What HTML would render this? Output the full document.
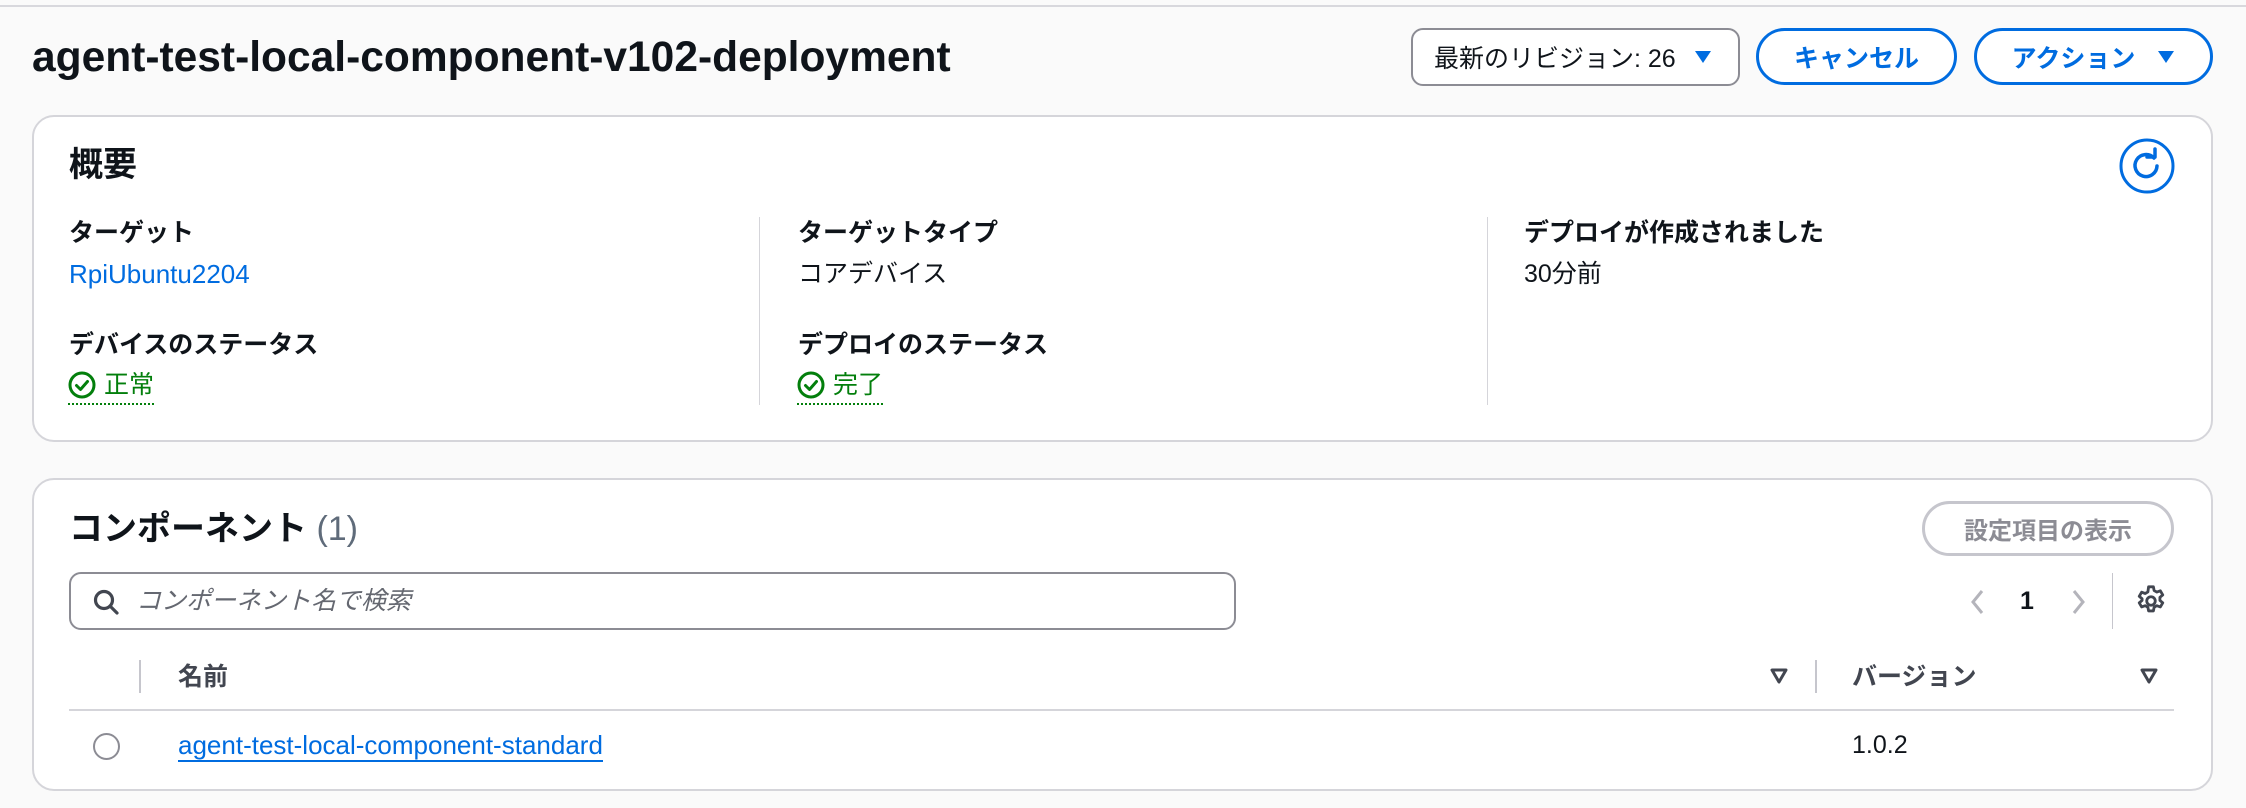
<!DOCTYPE html>
<html><head><meta charset="utf-8"><style>
*{margin:0;padding:0;box-sizing:border-box}
body{width:2246px;height:808px;background:#fafafa;font-family:"Liberation Sans","Noto Sans CJK JP",sans-serif;color:#0f141a;position:relative;overflow:hidden}
.a{position:absolute;white-space:nowrap}
.card{position:absolute;background:#fff;border:2px solid #d5d5da;border-radius:22px}
.lbl{font-size:25px;font-weight:bold;line-height:28px}
.val{font-size:25px;line-height:28px}
.blue{color:#006ce0}
.btn{position:absolute;border:3px solid #006ce0;border-radius:30px;color:#006ce0;font-weight:bold;font-size:25px;display:flex;align-items:center;justify-content:center;background:#fff}
.ok{color:#037f0c;font-size:25px;line-height:28px;border-bottom:2px dotted #037f0c;padding-bottom:4px;display:flex;align-items:center;gap:8px}
</style></head><body>
<div class="a" style="left:0;top:5px;width:2246px;height:2px;background:#d8d8dd"></div>
<div class="a" style="left:32px;top:34px;font-size:42.5px;font-weight:bold;line-height:48px">agent-test-local-component-v102-deployment</div>

<div class="a" style="left:1411px;top:28px;width:329px;height:58px;border:2px solid #8c8c94;border-radius:12px;background:#fff;font-size:25px;display:flex;align-items:center;padding-left:21px">最新のリビジョン: 26<svg style="margin-left:18px" width="18" height="14" viewBox="0 0 18 14"><path d="M1 1h16L9 13z" fill="#006ce0"/></svg></div>
<div class="btn" style="left:1756px;top:28px;width:201px;height:57px">キャンセル</div>
<div class="btn" style="left:1974px;top:28px;width:239px;height:57px">アクション<svg style="margin-left:22px" width="18" height="14" viewBox="0 0 18 14"><path d="M1 1h16L9 13z" fill="#006ce0"/></svg></div>

<div class="card" style="left:32px;top:115px;width:2181px;height:327px"></div>
<div class="a" style="left:69px;top:145px;font-size:34px;font-weight:bold;line-height:40px">概要</div>
<svg class="a" style="left:2119px;top:138px" width="56" height="56" viewBox="0 0 56 56"><circle cx="28" cy="28" r="26" fill="none" stroke="#006ce0" stroke-width="3"/><path d="M35 20a11 11 0 1 0 3 8" fill="none" stroke="#006ce0" stroke-width="3.5" stroke-linecap="round"/><path d="M28 19h8v-8" fill="none" stroke="#006ce0" stroke-width="3.5" stroke-linecap="round" stroke-linejoin="round"/></svg>

<div class="a lbl" style="left:69px;top:219px">ターゲット</div>
<div class="a val blue" style="left:69px;top:260px;font-size:26px">RpiUbuntu2204</div>
<div class="a lbl" style="left:69px;top:331px">デバイスのステータス</div>
<div class="a ok" style="left:68px;top:371px"><svg width="28" height="28" viewBox="0 0 28 28"><circle cx="14" cy="14" r="12" fill="none" stroke="#037f0c" stroke-width="3"/><path d="M8.5 14.5l4 4 7-8" fill="none" stroke="#037f0c" stroke-width="3" stroke-linecap="round" stroke-linejoin="round"/></svg>正常</div>

<div class="a" style="left:759px;top:217px;width:1px;height:188px;background:#d5d5da"></div>
<div class="a lbl" style="left:798px;top:219px">ターゲットタイプ</div>
<div class="a val" style="left:798px;top:260px">コアデバイス</div>
<div class="a lbl" style="left:798px;top:331px">デプロイのステータス</div>
<div class="a ok" style="left:797px;top:371px"><svg width="28" height="28" viewBox="0 0 28 28"><circle cx="14" cy="14" r="12" fill="none" stroke="#037f0c" stroke-width="3"/><path d="M8.5 14.5l4 4 7-8" fill="none" stroke="#037f0c" stroke-width="3" stroke-linecap="round" stroke-linejoin="round"/></svg>完了</div>

<div class="a" style="left:1487px;top:217px;width:1px;height:188px;background:#d5d5da"></div>
<div class="a lbl" style="left:1524px;top:219px">デプロイが作成されました</div>
<div class="a val" style="left:1524px;top:260px">30分前</div>

<div class="card" style="left:32px;top:478px;width:2181px;height:313px"></div>
<div class="a" style="left:69px;top:509px;font-size:34px;font-weight:bold;line-height:40px">コンポーネント <span style="color:#5f6b7a;font-weight:normal">(1)</span></div>
<div class="a" style="left:1922px;top:501px;width:252px;height:55px;border:3px solid #c6c6cd;border-radius:28px;color:#8c8c94;font-weight:bold;font-size:24px;display:flex;align-items:center;justify-content:center">設定項目の表示</div>

<div class="a" style="left:69px;top:572px;width:1167px;height:58px;border:2px solid #8c8c94;border-radius:12px;background:#fff"></div>
<svg class="a" style="left:92px;top:588px" width="28" height="28" viewBox="0 0 28 28"><circle cx="12" cy="12" r="8.5" fill="none" stroke="#424650" stroke-width="3.2"/><path d="M18 18l7 7" stroke="#424650" stroke-width="3.2" stroke-linecap="round"/></svg>
<div class="a" style="left:136px;top:586px;font-size:25px;font-style:italic;color:#656871;line-height:30px">コンポーネント名で検索</div>

<svg class="a" style="left:1968px;top:588px" width="20" height="28" viewBox="0 0 20 28"><path d="M14 3L5 14l9 11" fill="none" stroke="#b4b4bb" stroke-width="3"/></svg>
<div class="a" style="left:2020px;top:586px;font-size:25px;font-weight:bold;line-height:30px">1</div>
<svg class="a" style="left:2068px;top:588px" width="20" height="28" viewBox="0 0 20 28"><path d="M6 3l9 11-9 11" fill="none" stroke="#b4b4bb" stroke-width="3"/></svg>
<div class="a" style="left:2112px;top:573px;width:1px;height:56px;background:#c6c6cd"></div>
<svg class="a" style="left:2134px;top:584px" width="34" height="34" viewBox="0 0 24 24"><path d="M10.3 2h3.4l.5 2.6 1.9 1.1 2.5-.9 1.7 2.9-2 1.7v2.2l2 1.7-1.7 2.9-2.5-.9-1.9 1.1-.5 2.6h-3.4l-.5-2.6-1.9-1.1-2.5.9-1.7-2.9 2-1.7V10.4l-2-1.7 1.7-2.9 2.5.9 1.9-1.1z" fill="none" stroke="#424650" stroke-width="2" stroke-linejoin="round"/><circle cx="12" cy="12" r="3" fill="none" stroke="#424650" stroke-width="2"/></svg>

<div class="a" style="left:139px;top:660px;width:2px;height:33px;background:#c6c6cd"></div>
<div class="a" style="left:178px;top:662px;font-size:25px;font-weight:bold;color:#424650;line-height:30px">名前</div>
<svg class="a" style="left:1770px;top:668px" width="18" height="16" viewBox="0 0 18 16"><path d="M2 2h14L9 14z" fill="none" stroke="#424650" stroke-width="3" stroke-linejoin="round"/></svg>
<div class="a" style="left:1815px;top:660px;width:2px;height:33px;background:#c6c6cd"></div>
<div class="a" style="left:1852px;top:662px;font-size:25px;font-weight:bold;color:#424650;line-height:30px">バージョン</div>
<svg class="a" style="left:2140px;top:668px" width="18" height="16" viewBox="0 0 18 16"><path d="M2 2h14L9 14z" fill="none" stroke="#424650" stroke-width="3" stroke-linejoin="round"/></svg>
<div class="a" style="left:69px;top:709px;width:2105px;height:2px;background:#d5d5da"></div>

<div class="a" style="left:93px;top:733px;width:27px;height:27px;border:2px solid #8c8c94;border-radius:50%"></div>
<div class="a blue" style="left:178px;top:730px;font-size:26px;line-height:30px;border-bottom:2px solid #006ce0">agent-test-local-component-standard</div>
<div class="a" style="left:1852px;top:730px;font-size:25px;line-height:30px">1.0.2</div>
</body></html>
